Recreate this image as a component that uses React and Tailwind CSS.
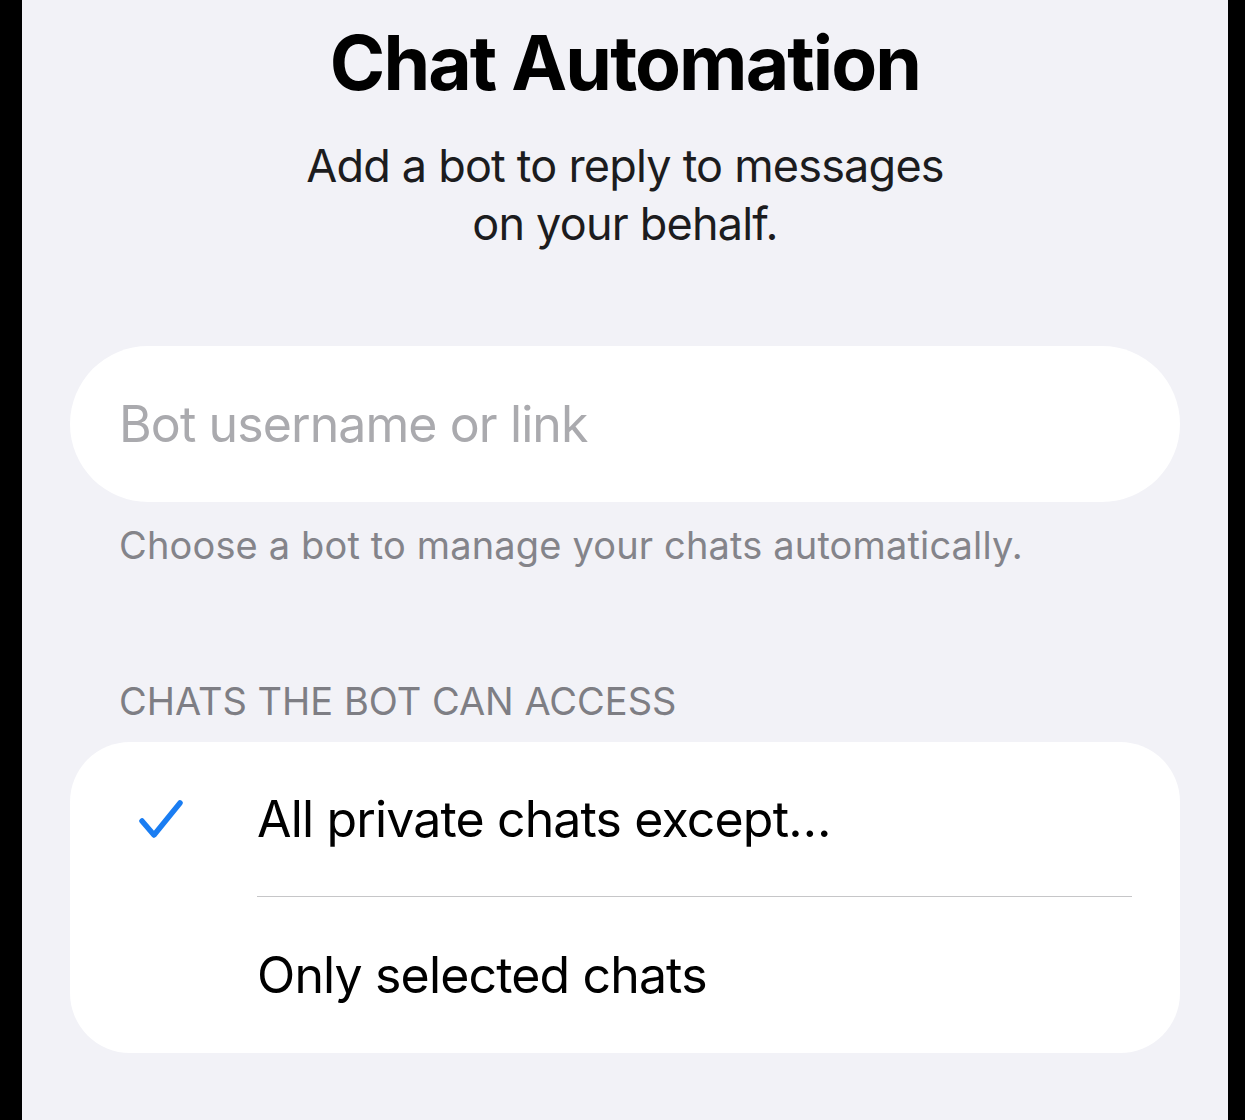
import React from 'react';

function Check() {
  return (
    <svg width="46" height="46" viewBox="0 0 46 46" fill="none" className="block">
      <path
        d="M4 24 L16 38 L42 6"
        stroke="#1a7df2"
        strokeWidth="5.5"
        strokeLinecap="round"
        strokeLinejoin="round"
      />
    </svg>
  );
}

function OptionRow({ label, checked, last }) {
  return (
    <div className={`flex items-stretch ${last ? 'h-[156px]' : 'h-[155px]'}`}>
      <div className="flex w-[187px] shrink-0 items-center pl-[68px]">
        {checked && <Check />}
      </div>
      <div className={`mr-[48px] flex flex-1 items-center ${last ? '' : 'border-b border-[#c6c6c8]'}`}>
        <span className="text-[50px] leading-none tracking-[-0.85px] text-black">{label}</span>
      </div>
    </div>
  );
}

export default function App() {
  return (
    <div className="flex h-[1120px] w-full overflow-hidden bg-black pl-[22px] pr-[17px] font-['Inter',sans-serif]">
      <div className="flex-1 bg-[#f2f2f7] px-[48px] pt-[25px]">
        <h1 className="text-center text-[75px] font-bold leading-[75px] tracking-[-1.9px] text-black">
          Chat Automation
        </h1>
        <p className="mt-[37px] text-center text-[45px] leading-[58px] tracking-[-0.8px] text-[#1c1c1e]">
          Add a bot to reply to messages
          <br />
          on your behalf.
        </p>

        <div className="mt-[93px] flex h-[156px] items-center rounded-full bg-white pl-[49px]">
          <span className="text-[50px] leading-none tracking-[-0.9px] text-[#aaaaae]">Bot username or link</span>
        </div>
        <p className="mt-[20px] pl-[49px] text-[38px] leading-[46px] tracking-[0.15px] text-[#84848a]">
          Choose a bot to manage your chats automatically.
        </p>

        <p className="mt-[110px] pl-[49px] text-[38px] uppercase leading-[46px] text-[#7e7e84]">
          Chats the bot can access
        </p>
        <div className="mt-[18px] rounded-[60px] bg-white">
          <OptionRow label="All private chats except…" checked />
          <OptionRow label="Only selected chats" last />
        </div>
      </div>
    </div>
  );
}
